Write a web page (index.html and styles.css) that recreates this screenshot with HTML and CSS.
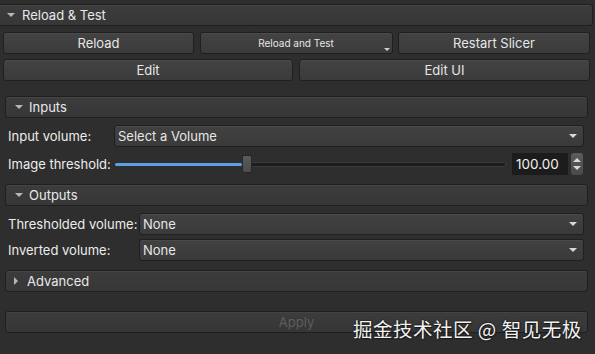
FILE: index.html
```html
<!DOCTYPE html>
<html lang="en">
<head>
<meta charset="UTF-8">
<title>Module Panel</title>
<link rel="stylesheet" href="styles.css">
</head>
<body>

<div class="panel">
    <div class="section-head top"><span class="arrow down"></span>Reload &amp; Test</div>
    <div class="button-row three">
        <div class="button">Reload</div>
        <div class="button small">Reload and Test<span class="corner"></span></div>
        <div class="button">Restart Slicer</div>
    </div>
    <div class="button-row two">
        <div class="button">Edit</div>
        <div class="button">Edit UI</div>
    </div>

    <div class="section-head inset first"><span class="arrow down"></span>Inputs</div>
    <div class="form inputs">
        <label>Input volume:</label>
        <div class="combo">Select a Volume<span class="drop"></span></div>
        <label>Image threshold:</label>
        <div class="slider-row">
            <div class="slider">
                <div class="fill"></div>
                <div class="handle"></div>
                <div class="rest"></div>
            </div>
            <div class="spinbox">100.00</div>
            <div class="spin-arrows"><span class="up"></span><span class="dn"></span></div>
        </div>
    </div>

    <div class="section-head inset"><span class="arrow down"></span>Outputs</div>
    <div class="form outputs">
        <label>Thresholded volume:</label>
        <div class="combo">None<span class="drop"></span></div>
        <label>Inverted volume:</label>
        <div class="combo">None<span class="drop"></span></div>
    </div>

    <div class="section-head inset"><span class="arrow right"></span>Advanced</div>

    <div class="button apply">Apply</div>
</div>

<div class="watermark">掘金技术社区 @ 智见无极</div>

</body>
</html>
```

FILE: styles.css
```css
body {
    margin: 0;
    background: #2e2e2e;
    font-family: "Inter", "Liberation Sans", sans-serif;
    font-size: 13px;
    color: #e4e4e4;
    width: 595px;
    height: 354px;
    overflow: hidden;
    position: relative;
}
.panel {
    padding-top: 4px;
}
.section-head {
    height: 20px;
    line-height: 20px;
    border: 1px solid #1f1f1f;
    border-radius: 3px;
    background: linear-gradient(#3c3c3c, #373737);
    box-shadow: inset 0 1px 0 #454545;
    display: flex;
    align-items: center;
    color: #e8e8e8;
}
.section-head.top {
    margin: 0 2px 0 0;
    border-left: none;
    border-radius: 0 3px 3px 0;
}
.section-head.inset {
    margin: 9px 7px 0 5px;
}
.section-head.first {
    margin-top: 15px;
}
.arrow {
    width: 0;
    height: 0;
    margin: 0 6px 0 9px;
}
.arrow.down {
    border-left: 4px solid transparent;
    border-right: 4px solid transparent;
    border-top: 4px solid #b8b8b8;
}
.arrow.right {
    border-top: 4px solid transparent;
    border-bottom: 4px solid transparent;
    border-left: 4px solid #b8b8b8;
    margin: 0 9px 0 8px;
}
.section-head.top .arrow {
    margin-left: 7px;
    margin-right: 7px;
}
.button-row {
    display: grid;
    margin: 5px 5px 0 3px;
    gap: 5px;
}
.button-row.three {
    margin-top: 6px;
    grid-template-columns: 191px 193px 192px;
    column-gap: 5.5px;
}
.button-row.two {
    grid-template-columns: 290px 291px;
    column-gap: 6px;
}
.button {
    height: 20px;
    line-height: 20px;
    border: 1px solid #1f1f1f;
    border-radius: 3px;
    background: linear-gradient(#434343, #3b3b3b);
    box-shadow: inset 0 1px 0 #4b4b4b;
    text-align: center;
    color: #e6e6e6;
    position: relative;
}
.button.small {
    font-size: 10px;
}
.corner {
    position: absolute;
    right: 2px;
    bottom: 2px;
    border-left: 3px solid transparent;
    border-right: 3px solid transparent;
    border-top: 3px solid #cfcfcf;
}
.form {
    display: grid;
    margin: 7px 11px 0 8px;
    align-items: center;
}
.form.inputs {
    grid-template-columns: 106px 1fr;
    row-gap: 6px;
}
.form.outputs {
    grid-template-columns: 131px 1fr;
    row-gap: 4px;
}
.form label {
    color: #ececec;
}
.combo {
    height: 20px;
    line-height: 20px;
    border: 1px solid #1f1f1f;
    border-radius: 3px;
    background: linear-gradient(#414141, #3a3a3a);
    box-shadow: inset 0 1px 0 #4a4a4a;
    padding-left: 3px;
    color: #e6e6e6;
    position: relative;
}
.drop {
    position: absolute;
    right: 6px;
    top: 8px;
    border-left: 4px solid transparent;
    border-right: 4px solid transparent;
    border-top: 4px solid #d8d8d8;
}
.slider-row {
    display: flex;
    align-items: center;
    height: 22px;
}
.slider {
    width: 391px;
    display: flex;
    align-items: center;
    margin-left: 1px;
}
.fill {
    width: 127px;
    height: 3px;
    background: #5d9fe2;
    border-radius: 2px;
}
.handle {
    width: 8px;
    height: 16px;
    background: linear-gradient(#5a5a5a, #4c4c4c);
    border: 1px solid #262626;
    border-radius: 2px;
}
.rest {
    flex: 1;
    height: 3px;
    background: #1d1d1d;
    border: 1px solid #3a3a3a;
    border-left: none;
    border-radius: 0 2px 2px 0;
}
.spinbox {
    width: 52px;
    height: 22px;
    line-height: 22px;
    margin-left: 6px;
    padding-left: 4px;
    background: #1c1c1c;
    color: #f2f2f2;
    font-size: 13.5px;
}
.spin-arrows {
    width: 12px;
    height: 22px;
    margin-left: 3px;
    background: linear-gradient(#5c5c5c, #4a4a4a);
    border-radius: 3px;
    display: flex;
    flex-direction: column;
    align-items: center;
    justify-content: center;
    gap: 4px;
}
.spin-arrows .up {
    border-left: 4px solid transparent;
    border-right: 4px solid transparent;
    border-bottom: 4px solid #d8d8d8;
}
.spin-arrows .dn {
    border-left: 4px solid transparent;
    border-right: 4px solid transparent;
    border-top: 4px solid #d8d8d8;
}
.apply {
    margin: 19px 7px 0 5px;
    color: #5e5e5e;
    background: linear-gradient(#3c3c3c, #363636);
    box-shadow: inset 0 1px 0 #444;
}
.watermark {
    position: absolute;
    left: 353px;
    top: 314px;
    font-family: "Noto Sans CJK SC", sans-serif;
    font-size: 19.5px;
    color: #f2f2f2;
    text-shadow: 0 0 2px #000, 1px 1px 1px #222;
    letter-spacing: 0.5px;
}
```
